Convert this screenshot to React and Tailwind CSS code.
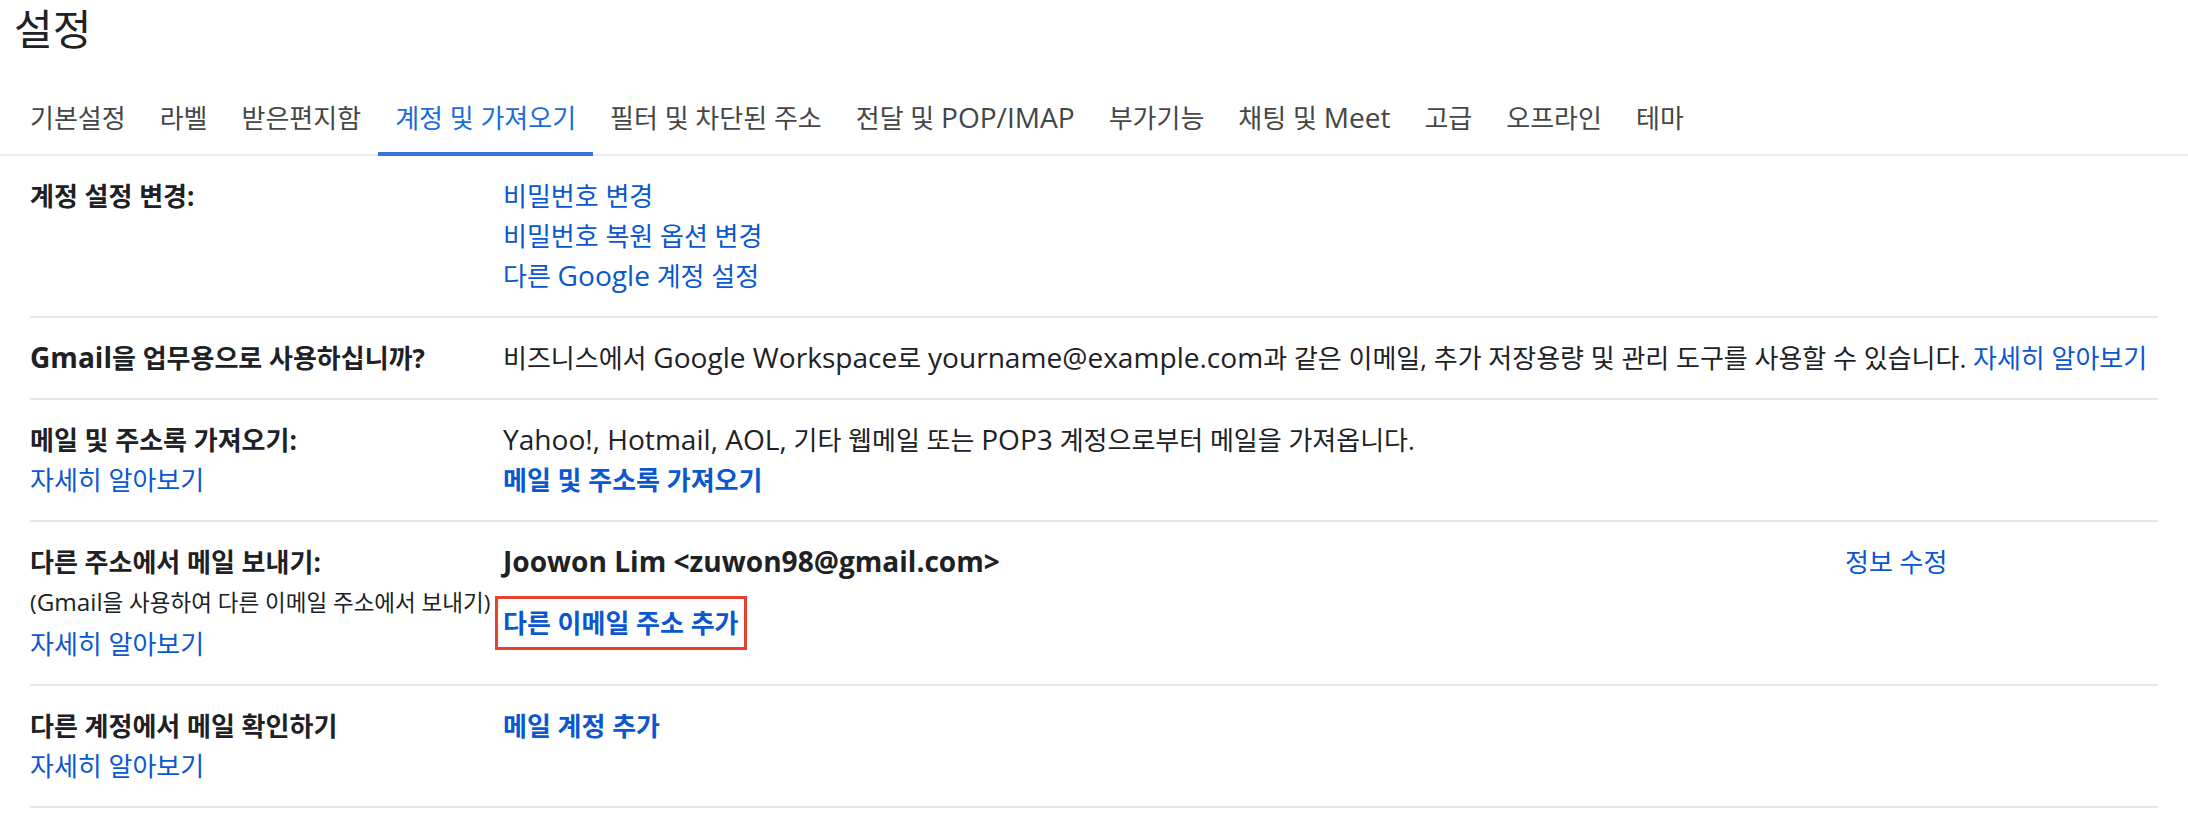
import React from "react";

// latin runs render a bit larger than the hangul around them
const L = ({ children }) => (
  <span className="text-[1.08em] leading-none">{children}</span>
);

const TABS = [
  ["기본설정"],
  ["라벨"],
  ["받은편지함"],
  ["계정 및 가져오기"],
  ["필터 및 차단된 주소"],
  ["전달 및 ", "POP/IMAP"],
  ["부가기능"],
  ["채팅 및 ", "Meet"],
  ["고급"],
  ["오프라인"],
  ["테마"],
];

const ACTIVE_TAB = "계정 및 가져오기";

const Link = ({ children, bold }) => (
  <a className={`text-[#0b57d0] cursor-pointer ${bold ? "font-bold" : ""}`}>
    {children}
  </a>
);

const Row = ({ label, children }) => (
  <div className="flex border-b-2 border-[#e6e6e6] pt-[20px] pb-[20px]">
    <div className="w-[473px] shrink-0">{label}</div>
    <div className="flex-1 min-w-0">{children}</div>
  </div>
);

const Label = ({ children }) => (
  <div className="font-bold text-[#202124]">{children}</div>
);

export default function App() {
  return (
    <div className="min-h-screen bg-white text-[#202124] font-['Open_Sans','Noto_Sans_CJK_KR',sans-serif]">
      {/* Title */}
      <div className="pl-[14px] pt-[5px] h-[72px] text-[42px] leading-[48px]">
        설정
      </div>

      {/* Tabs */}
      <div className="flex pl-[13px] border-b-2 border-[#ececec] text-[26px]">
        {TABS.map(([ko, en]) => {
          const active = ko === ACTIVE_TAB;
          return (
            <div
              key={ko}
              className={`px-[17px] h-[84px] flex items-center border-b-4 -mb-[2px] whitespace-nowrap ${
                active
                  ? "text-[#1a6be0] border-[#3574e0]"
                  : "text-[#444746] border-transparent"
              }`}
            >
              <span className="pt-[11px] leading-[30px]">
                {ko}
                {en && <L>{en}</L>}
              </span>
            </div>
          );
        })}
      </div>

      {/* Content */}
      <div className="mx-[30px] text-[26px] leading-[40px]">
        <Row label={<Label>계정 설정 변경:</Label>}>
          <div>
            <Link>비밀번호 변경</Link>
          </div>
          <div>
            <Link>비밀번호 복원 옵션 변경</Link>
          </div>
          <div>
            <Link>
              다른 <L>Google</L> 계정 설정
            </Link>
          </div>
        </Row>

        <Row
          label={
            <Label>
              <L>Gmail</L>을 업무용으로 사용하십니까?
            </Label>
          }
        >
          <div className="whitespace-nowrap">
            비즈니스에서 <L>Google Workspace</L>로{" "}
            <L>yourname@example.com</L>과 같은 이메일, 추가 저장용량 및 관리
            도구를 사용할 수 있습니다. <Link>자세히 알아보기</Link>
          </div>
        </Row>

        <Row
          label={
            <>
              <Label>메일 및 주소록 가져오기:</Label>
              <div>
                <Link>자세히 알아보기</Link>
              </div>
            </>
          }
        >
          <div>
            <L>Yahoo!, Hotmail, AOL,</L> 기타 웹메일 또는 <L>POP3</L>{" "}
            계정으로부터 메일을 가져옵니다.
          </div>
          <div>
            <Link bold>메일 및 주소록 가져오기</Link>
          </div>
        </Row>

        <Row
          label={
            <>
              <Label>다른 주소에서 메일 보내기:</Label>
              <div className="text-[22.5px] leading-[42px]">
                (<L>Gmail</L>을 사용하여 다른 이메일 주소에서 보내기)
              </div>
              <div>
                <Link>자세히 알아보기</Link>
              </div>
            </>
          }
        >
          <div className="flex">
            <div className="w-[1342px] shrink-0">
              <div className="font-bold">
                <L>Joowon Lim &lt;zuwon98@gmail.com&gt;</L>
              </div>
              <div className="mt-[14px] -ml-[8px] inline-block border-[3px] border-[#e5432d] px-[5px] leading-[48px]">
                <Link bold>다른 이메일 주소 추가</Link>
              </div>
            </div>
            <div>
              <Link>정보 수정</Link>
            </div>
          </div>
        </Row>

        <Row
          label={
            <>
              <Label>다른 계정에서 메일 확인하기</Label>
              <div>
                <Link>자세히 알아보기</Link>
              </div>
            </>
          }
        >
          <Link bold>메일 계정 추가</Link>
        </Row>
      </div>
    </div>
  );
}
